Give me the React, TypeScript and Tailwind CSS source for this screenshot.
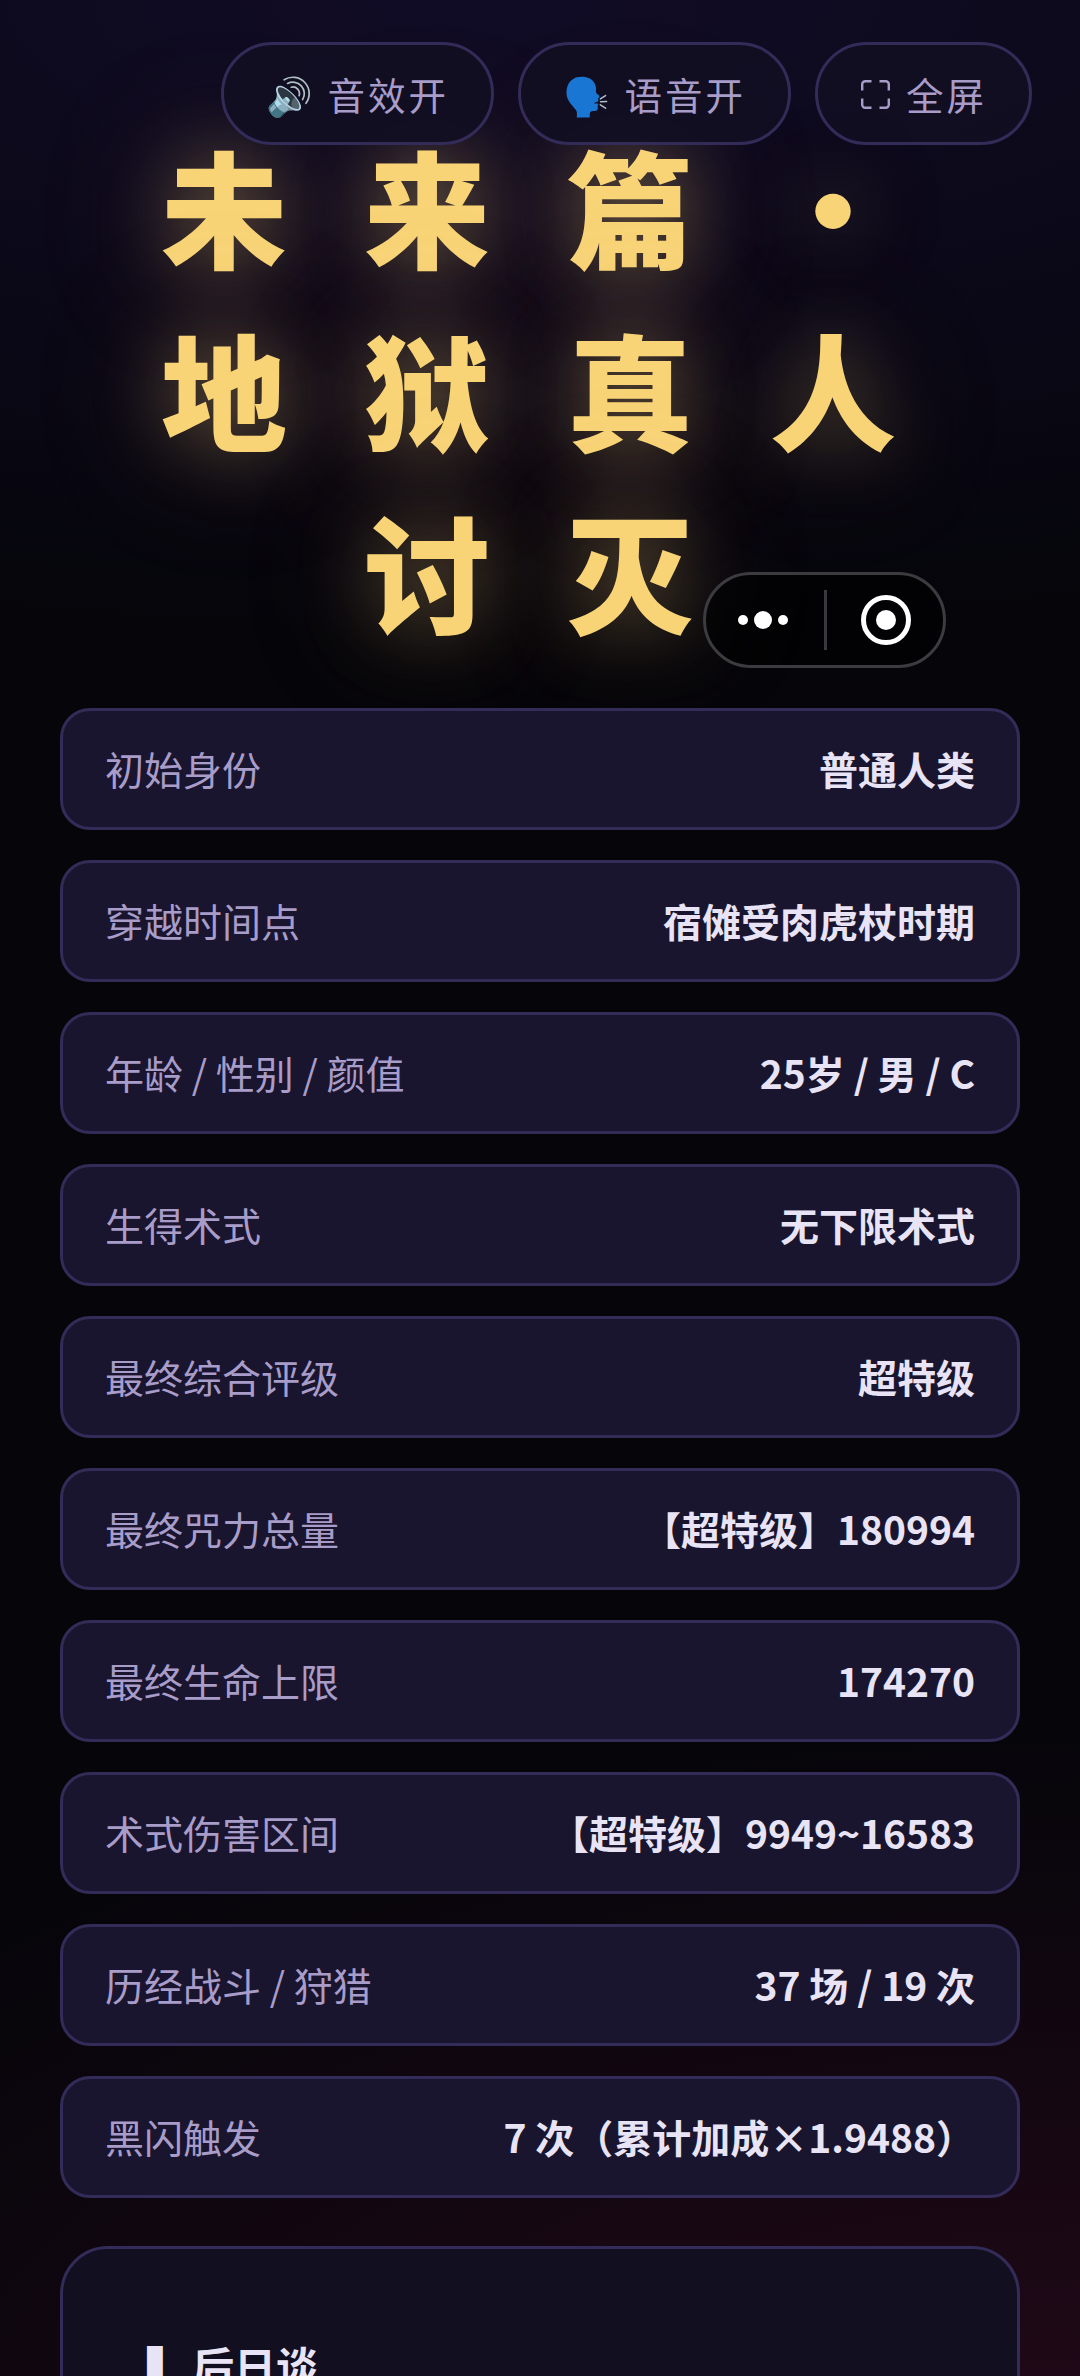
const STATS: Array<{ label: string; value: string }> = [
  { label: '初始身份', value: '普通人类' },
  { label: '穿越时间点', value: '宿傩受肉虎杖时期' },
  { label: '年龄 / 性别 / 颜值', value: '25岁 / 男 / C' },
  { label: '生得术式', value: '无下限术式' },
  { label: '最终综合评级', value: '超特级' },
  { label: '最终咒力总量', value: '【超特级】180994' },
  { label: '最终生命上限', value: '174270' },
  { label: '术式伤害区间', value: '【超特级】9949~16583' },
  { label: '历经战斗 / 狩猎', value: '37 场 / 19 次' },
  { label: '黑闪触发', value: '7 次（累计加成×1.9488）' },
];

const FullscreenIcon = () => (
  <svg className="w-[29px] h-[29px]" viewBox="0 0 29 29" fill="none" stroke="currentColor" strokeWidth="2.4">
    <path d="M1.2 10.5V4.2a3 3 0 0 1 3-3H10.5M18.5 1.2h6.3a3 3 0 0 1 3 3V10.5M27.8 18.5v6.3a3 3 0 0 1-3 3H18.5M10.5 27.8H4.2a3 3 0 0 1-3-3V18.5" />
  </svg>
);

const Toolbar = () => {
  const pill =
    'h-[103px] flex items-center rounded-full border-[3px] border-[#332b58] bg-[#120e22]/90 pt-[2px] text-[37.5px] tracking-[3px] text-[#a89cc8] whitespace-nowrap';
  return (
    <div className="absolute top-[42px] right-[48px] z-10 flex gap-[24px]">
      <button className={`${pill} w-[273px] pl-[42px]`}>🔊 音效开</button>
      <button className={`${pill} w-[273px] pl-[42px]`}>🗣️ 语音开</button>
      <button className={`${pill} w-[217px] pl-[43px] gap-[16px]`}>
        <FullscreenIcon />
        <span>全屏</span>
      </button>
    </div>
  );
};

const Capsule = () => (
  <div className="absolute top-[572px] left-[703px] z-10 flex items-center w-[243px] h-[96px] rounded-full border-[3px] border-[#3c3b3f] bg-black/60">
    <div className="flex-1 flex items-center justify-center gap-[6px] pr-[3px]">
      <span className="w-[10px] h-[10px] rounded-full bg-white" />
      <span className="w-[18px] h-[18px] rounded-full bg-white" />
      <span className="w-[10px] h-[10px] rounded-full bg-white" />
    </div>
    <div className="w-[3px] h-[60px] bg-[#39383c]" />
    <div className="flex-1 flex items-center justify-center pl-[2px]">
      <span className="w-[50px] h-[50px] rounded-full border-[5px] border-white flex items-center justify-center">
        <span className="w-[20px] h-[20px] rounded-full bg-white" />
      </span>
    </div>
  </div>
);

const StatRow = ({ label, value }: { label: string; value: string }) => (
  <div className="h-[122px] flex items-center justify-between rounded-[30px] border-[3px] border-[#332b58] bg-[#1a152f] px-[42px] pb-[1px] text-[39px]">
    <span className="text-[#a89cc8]">{label}</span>
    <span className="font-bold text-[#e8e4f5]">{value}</span>
  </div>
);

export default function App() {
  return (
    <div
      lang="zh-CN"
      className="relative w-[1080px] h-[2376px] overflow-hidden bg-[#05050a] bg-[radial-gradient(170%_27%_at_45%_0%,#110c26_0%,transparent_100%),radial-gradient(150%_32%_at_100%_104%,#230919_0%,transparent_100%)] font-['Noto_Sans_CJK_SC',sans-serif]"
    >
      <Toolbar />
      <Capsule />
      <div className="px-[60px] pt-[113px]">
        <h1 className="h-[595px] pl-[54px] text-center text-[126px] leading-[182.5px] font-black tracking-[77px] text-[#f8d477] [text-shadow:0_0_72px_rgba(248,212,119,0.35),0_0_144px_rgba(240,160,110,0.25)]">
          未来篇·
          <br />
          地狱真人
          <br />
          讨灭
        </h1>
        <div className="flex flex-col gap-[30px]">
          {STATS.map((s) => (
            <StatRow key={s.label} label={s.label} value={s.value} />
          ))}
        </div>
        <section className="mt-[48px] h-[400px] rounded-[48px] border-[3px] border-[#332b58] bg-[#120f20] px-[84px] pt-[84px]">
          <h2 className="flex text-[42px] font-bold text-[#e8e4f5]">
            <span className="w-[45px]">▍</span>
            后日谈
          </h2>
        </section>
      </div>
    </div>
  );
}
